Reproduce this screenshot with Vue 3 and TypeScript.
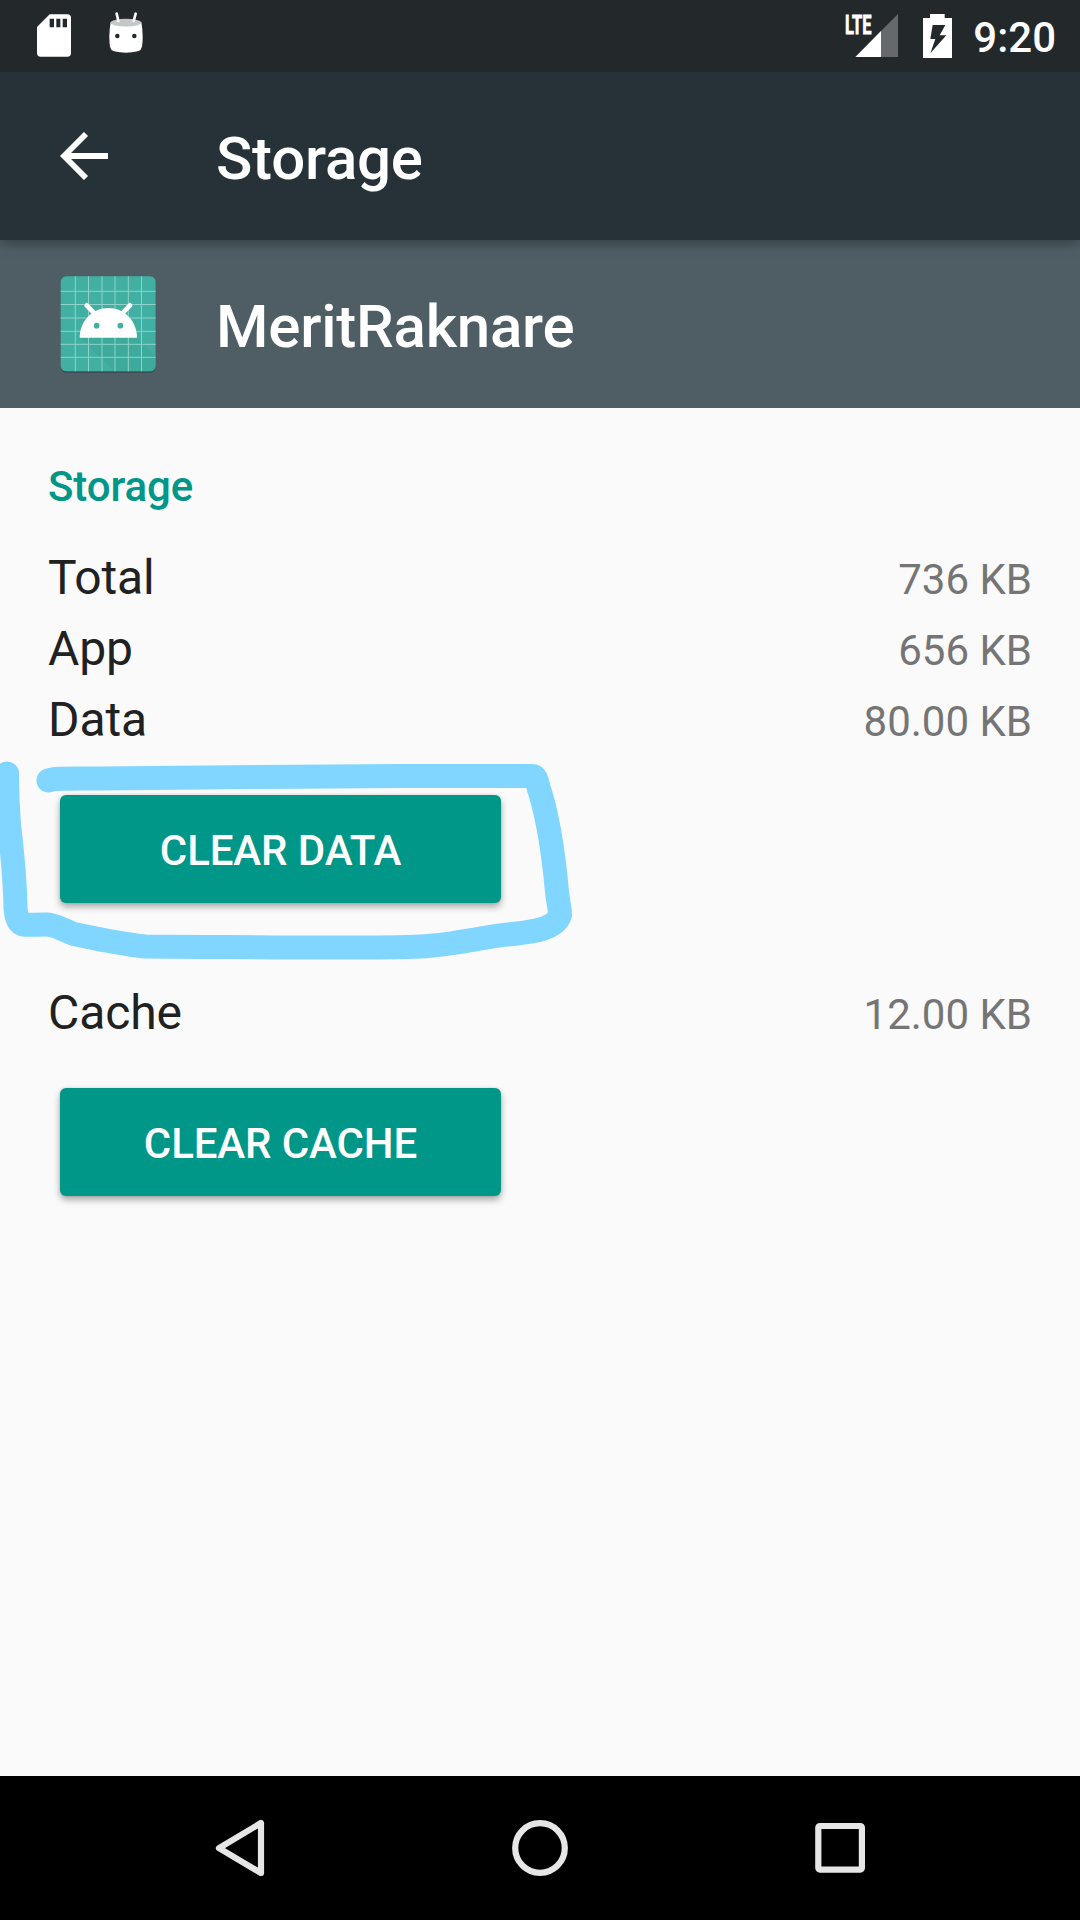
<script setup lang="ts">
interface SizeRow {
  label: string
  value: string
}

const storageRows: SizeRow[] = [
  { label: 'Total', value: '736 KB' },
  { label: 'App', value: '656 KB' },
  { label: 'Data', value: '80.00 KB' },
]

const cacheRow: SizeRow = { label: 'Cache', value: '12.00 KB' }

const gridX: number[] = [106, 145.5, 186, 225, 265, 304.5]
const gridY: number[] = [124, 163.5, 204, 244, 283, 322]
</script>

<template>
  <div class="screen">
    <header class="status-bar">
      <svg class="sd-icon" width="34" height="43" viewBox="0 0 102 129">
        <path fill="#fff" fill-rule="evenodd" d="M38 1H91Q102 1 102 12V117Q102 128 91 128H11Q0 128 0 117V39ZM38 14V40H51V14ZM58 14V40H70V14ZM77 14V40H90V14Z" />
      </svg>
      <svg class="droid-icon" width="34" height="42" viewBox="327 36 102 126">
        <path fill="#fff" d="M332 66Q378 54 424 66Q431 105 426 140Q424 150 414 154Q378 162 342 154Q332 150 330 140Q325 105 332 66Z" />
        <ellipse cx="378" cy="68" rx="46" ry="11.5" fill="#c4c6c7" />
        <path d="M350 41L355 63M407 41L401 63" stroke="#fff" stroke-width="8" stroke-linecap="round" />
        <circle cx="352" cy="108" r="6.8" fill="#23282b" />
        <circle cx="403" cy="108" r="6.8" fill="#23282b" />
      </svg>
      <span class="spacer"></span>
      <svg class="signal-icon" width="54" height="44" viewBox="0 0 54 44">
        <path fill="#66696b" d="M53 0V43H10Z" />
        <path fill="#fff" d="M36 17V43H10.500Z" />
        <text class="lte" x="0" y="19.700" textLength="26.500" lengthAdjust="spacingAndGlyphs">LTE</text>
      </svg>
      <svg class="battery-icon" width="29" height="44" viewBox="0 0 87 132">
        <path fill="#fff" fill-rule="evenodd" d="M21 0H65V12H87V132H0V12H21ZM29 33L22 75H37L22 118L70 64H50L67 33Z" />
      </svg>
      <span class="clock">9:20</span>
    </header>

    <div class="app-bar">
      <svg class="back-icon" width="48" height="48" viewBox="0 0 48 48">
        <path d="M48 24H4M26 2L4 24L26 46" fill="none" stroke="#fff" stroke-width="5.800" />
      </svg>
      <h1 class="title">Storage</h1>
    </div>

    <div class="app-header">
      <svg class="app-icon" width="96" height="100" viewBox="60 78 288 300">
        <rect x="62" y="83" width="285" height="286" rx="17" fill="#3a454b" opacity=".7" />
        <rect x="62" y="79" width="285" height="285" rx="17" fill="#41b0a2" />
        <path d="M119 262H291L347 318V347Q347 364 330 364H221Z" fill="#369a8d" opacity=".3" />
        <g stroke="#8ed2c9" stroke-width="3">
          <line v-for="x in gridX" :key="'x' + x" :x1="x" :x2="x" y1="79" y2="364" />
          <line v-for="y in gridY" :key="'y' + y" x1="62" x2="347" :y1="y" :y2="y" />
        </g>
        <path d="M119 263C119 214 157 174 205 174S291 214 291 263Z" fill="#fff" />
        <path d="M140 166L164 191M270 166L246 191" stroke="#fff" stroke-width="14" stroke-linecap="round" />
        <circle cx="170" cy="227" r="8.500" fill="#41b0a2" />
        <circle cx="241" cy="227" r="8.500" fill="#41b0a2" />
      </svg>
      <h2 class="title">MeritRaknare</h2>
    </div>

    <main class="content">
      <h3 class="section-title">Storage</h3>
      <div v-for="row in storageRows" :key="row.label" class="row">
        <span class="label">{{ row.label }}</span>
        <span class="value">{{ row.value }}</span>
      </div>
      <button class="action" type="button">CLEAR DATA</button>
      <div class="row cache">
        <span class="label">{{ cacheRow.label }}</span>
        <span class="value">{{ cacheRow.value }}</span>
      </div>
      <button class="action" type="button">CLEAR CACHE</button>
    </main>

    <nav class="nav-bar">
      <svg width="60" height="60" viewBox="0 0 60 60">
        <path d="M51 5V55L9 30.200Z" />
      </svg>
      <svg width="60" height="60" viewBox="0 0 60 60">
        <circle cx="30" cy="30" r="24.800" />
      </svg>
      <svg width="60" height="60" viewBox="0 0 60 60">
        <rect x="8.300" y="8" width="43.600" height="43.600" rx="1.500" />
      </svg>
    </nav>

    <!-- Hand-drawn marker around the CLEAR DATA button -->
    <svg class="marker" width="600" height="220" viewBox="0 750 600 220">
      <path d="M48.500 780.500C54 778 64 778.500 100 778.500C180 778.500 300 776 400 776H532C538 776 537 786 540 792C550 825 554 858 557 892C558 902 560 908 560 915C555 930 530 932 512 934C480 937 455 945 420 946.500C370 949 250 947 145 946.500C120 944 98 939 74 934C60 929 56 924.500 46 924.500C35 924.500 30 925 23 924.500C18 923 16 916 15.500 908C15 880 12 850 9 825C7 800 7 790 7 773.500" />
    </svg>
  </div>
</template>

<style>
body {
  background: #fafafa;
}
</style>

<style scoped>
.screen {
  position: relative;
  display: flex;
  flex-direction: column;
  width: 1080px;
  height: 1920px;
  overflow: hidden;
  background: #fafafa;
  font-family: Roboto, "Noto Sans", sans-serif;
}

.status-bar {
  position: relative;
  z-index: 1;
  display: flex;
  align-items: flex-start;
  box-sizing: border-box;
  height: 72px;
  padding: 0 24px 0 37px;
  background: #23282b;
}

.sd-icon {
  margin-top: 14px;
}

.droid-icon {
  margin: 12px 0 0 38px;
}

.spacer {
  flex: 1;
}

.signal-icon {
  margin: 14px 24px 0 0;
  overflow: visible;
}

.lte {
  fill: #fff;
  stroke: #fff;
  stroke-width: 0.8;
  font-size: 26px;
  font-weight: 700;
}

.battery-icon {
  margin: 14px 21px 0 0;
}

.clock {
  padding-top: 2px;
  color: #fff;
  font-size: 42px;
  font-weight: 500;
  line-height: 72px;
}

.app-bar {
  position: relative;
  display: flex;
  align-items: center;
  height: 168px;
  background: #263238;
  box-shadow: 0 3px 12px rgba(0, 0, 0, 0.35);
}

.back-icon {
  margin: 0 108px 0 60px;
}

.app-header {
  display: flex;
  align-items: center;
  height: 168px;
  background: #4f5e65;
}

.app-icon {
  margin: 4px 60px 0;
}

.title {
  margin: 0;
  padding-top: 5px;
  color: #fff;
  font-size: 60px;
  font-weight: 500;
  letter-spacing: -0.22px;
  line-height: 80px;
}

.content {
  flex: 1;
  padding: 49px 48px 0;
}

.section-title {
  margin: 0 0 25px;
  color: #009688;
  font-size: 42px;
  font-weight: 500;
  letter-spacing: -0.1px;
  line-height: 60px;
}

.row {
  display: flex;
  align-items: baseline;
  justify-content: space-between;
  height: 71px;
  line-height: 71px;
}

.label {
  color: #212121;
  font-size: 48px;
  letter-spacing: -0.1px;
}

.value {
  color: #757575;
  font-size: 42px;
}

.cache {
  margin-top: 74px;
}

.action {
  display: block;
  width: 441px;
  height: 108px;
  margin: 40px 0 0 12px;
  padding: 3px 0 0;
  border: 0;
  border-radius: 6px;
  background: #009688;
  box-shadow: 0 4px 7px rgba(0, 0, 0, 0.32), 0 0 3px rgba(0, 0, 0, 0.12);
  color: #fff;
  font: 500 42px Roboto, "Noto Sans", sans-serif;
  letter-spacing: -0.1px;
}

.nav-bar {
  display: flex;
  justify-content: center;
  align-items: center;
  gap: 240px;
  height: 144px;
  background: #000;
}

.nav-bar svg {
  fill: none;
  stroke: #e6e6e6;
  stroke-width: 6.2;
  stroke-linejoin: round;
}

.marker {
  position: absolute;
  top: 750px;
  left: 0;
  fill: none;
  stroke: #80d6ff;
  stroke-width: 24;
  stroke-linecap: round;
  stroke-linejoin: round;
  pointer-events: none;
}
</style>
